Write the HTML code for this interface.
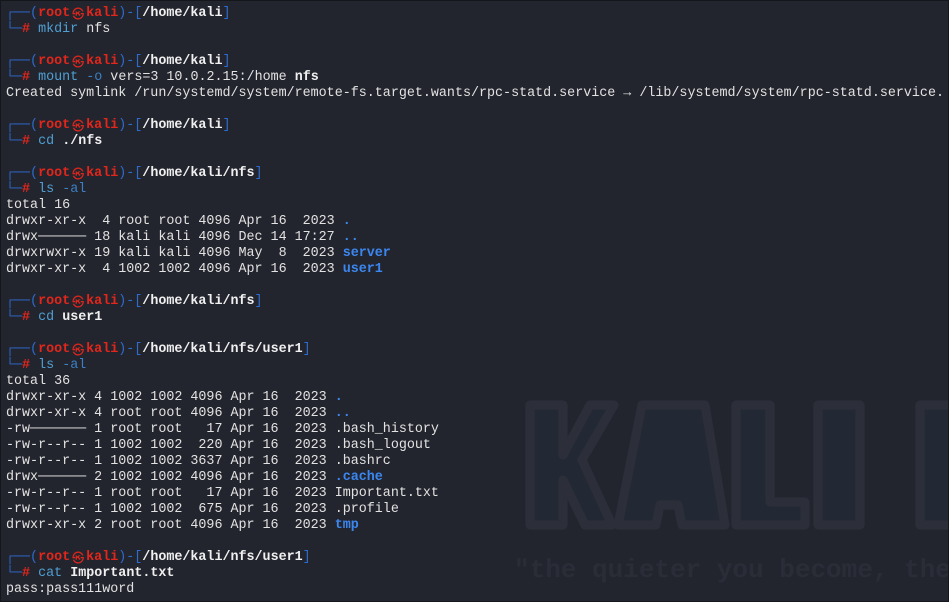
<!DOCTYPE html>
<html><head><meta charset="utf-8"><style>
html,body{margin:0;padding:0}
body{width:949px;height:602px;background:#23252e;overflow:hidden;position:relative;border:0}
#frame{position:absolute;left:0;top:0;width:947px;height:600px;border:1px solid #15161b}
pre{position:absolute;left:6px;top:6px;margin:0;font-family:"Liberation Mono","DejaVu Sans Mono",monospace;font-size:13.37px;line-height:16px;color:#e2e2e2;white-space:pre}
.b{color:#2d6bcd}
.r{color:#e2261c;font-weight:bold}
.w{color:#f0f0f0;font-weight:bold}
.c{color:#4f9fd3}
.o{color:#3c7fc4}
.d{color:#3b87f0;font-weight:bold}
.at{display:inline-block;width:16px;height:16px;line-height:16px;vertical-align:top;overflow:hidden;text-align:center;font-family:"Noto Sans CJK JP",sans-serif;font-size:12px;color:#e2261c;font-weight:bold}
svg{position:absolute;left:0;top:0}
</style></head><body>
<svg width="949" height="602">
<g fill="#222834" stroke="#2c2f3a" stroke-width="9" stroke-linejoin="round">
<path d="M530 405 L563 405 L563 455 L590 405 L614 405 L582 460 L612 525 L585 525 L563 480 L563 525 L530 525 Z"/>
<path d="M642 405 L705 405 L725 525 L682 525 L678 505 L660 505 L656 525 L618 525 Z"/>
<path d="M736 405 L770 405 L770 502 L805 502 L805 525 L736 525 Z"/>
<path d="M818 405 L860 405 L860 525 L818 525 Z"/>
<path d="M920 405 L960 405 L960 525 L920 525 Z"/>
</g>
<text x="514" y="577" font-family="Liberation Mono,monospace" font-weight="bold" font-size="26" fill="#2a2d37">"the quieter you become, the</text>
</svg>
<div id="frame"></div>
<pre><span class="b">┌──(</span><span class="r">root<span class="at">㉿</span>kali</span><span class="b">)-[</span><span class="w">/home/kali</span><span class="b">]</span>
<span class="b">└─</span><span class="r">#</span> <span class="c">mkdir</span> nfs

<span class="b">┌──(</span><span class="r">root<span class="at">㉿</span>kali</span><span class="b">)-[</span><span class="w">/home/kali</span><span class="b">]</span>
<span class="b">└─</span><span class="r">#</span> <span class="c">mount</span> <span class="o">-o</span> vers=3 10.0.2.15:/home <span class="w">nfs</span>
Created symlink /run/systemd/system/remote-fs.target.wants/rpc-statd.service → /lib/systemd/system/rpc-statd.service.

<span class="b">┌──(</span><span class="r">root<span class="at">㉿</span>kali</span><span class="b">)-[</span><span class="w">/home/kali</span><span class="b">]</span>
<span class="b">└─</span><span class="r">#</span> <span class="c">cd</span> <span class="w">./nfs</span>

<span class="b">┌──(</span><span class="r">root<span class="at">㉿</span>kali</span><span class="b">)-[</span><span class="w">/home/kali/nfs</span><span class="b">]</span>
<span class="b">└─</span><span class="r">#</span> <span class="c">ls</span> <span class="o">-al</span>
total 16
drwxr-xr-x  4 root root 4096 Apr 16  2023 <span class="d">.</span>
drwx────── 18 kali kali 4096 Dec 14 17:27 <span class="d">..</span>
drwxrwxr-x 19 kali kali 4096 May  8  2023 <span class="d">server</span>
drwxr-xr-x  4 1002 1002 4096 Apr 16  2023 <span class="d">user1</span>

<span class="b">┌──(</span><span class="r">root<span class="at">㉿</span>kali</span><span class="b">)-[</span><span class="w">/home/kali/nfs</span><span class="b">]</span>
<span class="b">└─</span><span class="r">#</span> <span class="c">cd</span> <span class="w">user1</span>

<span class="b">┌──(</span><span class="r">root<span class="at">㉿</span>kali</span><span class="b">)-[</span><span class="w">/home/kali/nfs/user1</span><span class="b">]</span>
<span class="b">└─</span><span class="r">#</span> <span class="c">ls</span> <span class="o">-al</span>
total 36
drwxr-xr-x 4 1002 1002 4096 Apr 16  2023 <span class="d">.</span>
drwxr-xr-x 4 root root 4096 Apr 16  2023 <span class="d">..</span>
-rw─────── 1 root root   17 Apr 16  2023 .bash_history
-rw-r--r-- 1 1002 1002  220 Apr 16  2023 .bash_logout
-rw-r--r-- 1 1002 1002 3637 Apr 16  2023 .bashrc
drwx────── 2 1002 1002 4096 Apr 16  2023 <span class="d">.cache</span>
-rw-r--r-- 1 root root   17 Apr 16  2023 Important.txt
-rw-r--r-- 1 1002 1002  675 Apr 16  2023 .profile
drwxr-xr-x 2 root root 4096 Apr 16  2023 <span class="d">tmp</span>

<span class="b">┌──(</span><span class="r">root<span class="at">㉿</span>kali</span><span class="b">)-[</span><span class="w">/home/kali/nfs/user1</span><span class="b">]</span>
<span class="b">└─</span><span class="r">#</span> <span class="c">cat</span> <span class="w">Important.txt</span>
pass:pass111word</pre>
</body></html>
